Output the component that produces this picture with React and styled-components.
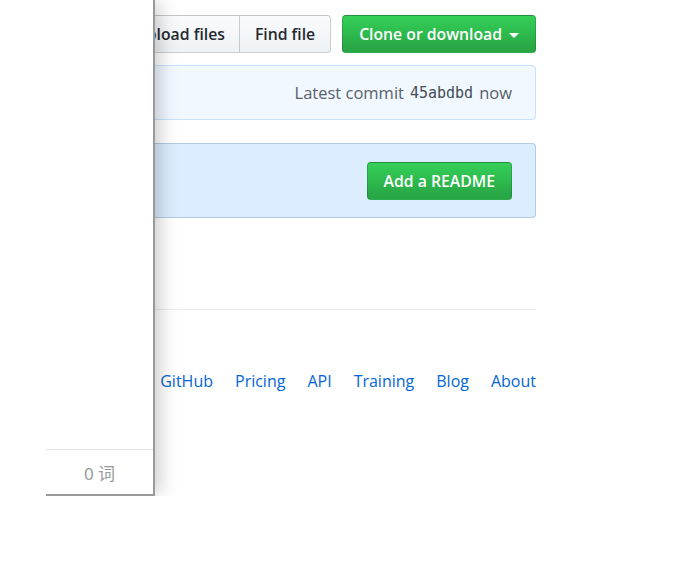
import React from "react";
import styled, { createGlobalStyle } from "styled-components";

const Global = createGlobalStyle`
  html, body { margin: 0; padding: 0; background: #fff; }
  body { font-family: "Open Sans", "Noto Sans", "Noto Sans CJK SC", sans-serif; }
  * { box-sizing: border-box; }
`;

const Viewport = styled.div`
  position: relative;
  width: 697px;
  height: 496px;
  overflow: hidden;
  background: #fff;
`;

const Container = styled.div`
  width: 536px;
  padding-top: 15px;
  display: flex;
  flex-direction: column;
`;

const FileNav = styled.div`
  display: flex;
  justify-content: flex-end;
  gap: 11px;
`;

const BtnGroup = styled.div`
  display: flex;
`;

const Btn = styled.button`
  height: 38px;
  padding: 0 ${(p) => p.$px || 15}px;
  font-family: inherit;
  font-size: 15.75px;
  font-weight: 600;
  line-height: 22px;
  white-space: nowrap;
  border: 1px solid rgba(27, 31, 35, 0.2);
  border-radius: 4px;
  color: #24292e;
  background-image: linear-gradient(-180deg, #fafbfc 0%, #eff3f6 90%);
  display: inline-flex;
  align-items: center;
  gap: 7px;
  cursor: pointer;
`;

const GroupBtn = styled(Btn)`
  border-radius: 0;
  & + & { margin-left: -1px; }
  &:first-child { border-radius: 4px 0 0 4px; }
  &:last-child { border-radius: 0 4px 4px 0; }
`;

const PrimaryBtn = styled(Btn)`
  color: #fff;
  background-image: linear-gradient(-180deg, #34d058 0%, #28a745 90%);
  border-color: rgba(27, 31, 35, 0.2);
`;

const Caret = styled.span`
  display: inline-block;
  width: 0;
  height: 0;
  border-top: 5px solid #fff;
  border-left: 5px solid transparent;
  border-right: 5px solid transparent;
  margin-top: 2px;
`;

const CommitTease = styled.div`
  margin-top: 12px;
  height: 55px;
  padding: 0 23px;
  display: flex;
  align-items: center;
  justify-content: flex-end;
  gap: 6px;
  background: #f1f8ff;
  border: 1px solid #c8e1ff;
  border-radius: 4px;
  color: #586069;
  font-size: 16.5px;
`;

const Sha = styled.code`
  font-family: "DejaVu Sans Mono", "Liberation Mono", monospace;
  font-size: 15px;
  color: #444d56;
`;

const Flash = styled.div`
  margin-top: 23px;
  height: 75px;
  padding: 0 23px;
  display: flex;
  align-items: center;
  justify-content: flex-end;
  background: #dbedff;
  border: 1px solid rgba(4, 66, 137, 0.2);
  border-radius: 4px;
`;

const Footer = styled.footer`
  margin-top: 91px;
  border-top: 1px solid #eaecef;
  padding-top: 60px;
  display: flex;
  justify-content: flex-end;
  gap: 22px;
`;

const FooterLink = styled.a`
  color: #0366d6;
  text-decoration: none;
  font-size: 16px;
  line-height: 22px;
  white-space: nowrap;
`;

const Panel = styled.aside`
  position: absolute;
  left: 0;
  top: 0;
  width: 155px;
  height: 496px;
  padding-left: 46px;
  background: #fff;
  border-right: 2px solid #9a9a9a;
  box-shadow: 6px 0 18px -2px rgba(0, 0, 0, 0.22);
  display: flex;
  z-index: 2;
`;

const PanelBody = styled.div`
  flex: 1;
  display: flex;
  flex-direction: column;
  border-bottom: 2px solid #9a9a9a;
`;

const PanelSpacer = styled.div`
  flex: 1;
`;

const StatusBar = styled.div`
  height: 45px;
  border-top: 1px solid #e5e5e5;
  display: flex;
  align-items: center;
  justify-content: center;
  gap: 3px;
  color: #999;
  font-size: 17px;
  font-family: "Noto Sans", "Noto Sans CJK SC", sans-serif;
`;

const links = ["GitHub", "Pricing", "API", "Training", "Blog", "About"];

export default function App() {
  return (
    <>
      <Global />
      <Viewport>
        <Container>
          <FileNav>
            <BtnGroup>
              <GroupBtn $px={14}>Upload files</GroupBtn>
              <GroupBtn $px={15}>Find file</GroupBtn>
            </BtnGroup>
            <PrimaryBtn $px={16}>
              Clone or download <Caret />
            </PrimaryBtn>
          </FileNav>
          <CommitTease>
            Latest commit <Sha>45abdbd</Sha> now
          </CommitTease>
          <Flash>
            <PrimaryBtn $px={16}>Add a README</PrimaryBtn>
          </Flash>
          <Footer>
            {links.map((l) => (
              <FooterLink key={l} href="#">
                {l}
              </FooterLink>
            ))}
          </Footer>
        </Container>
        <Panel>
          <PanelBody>
            <PanelSpacer />
            <StatusBar>0 词</StatusBar>
          </PanelBody>
        </Panel>
      </Viewport>
    </>
  );
}
